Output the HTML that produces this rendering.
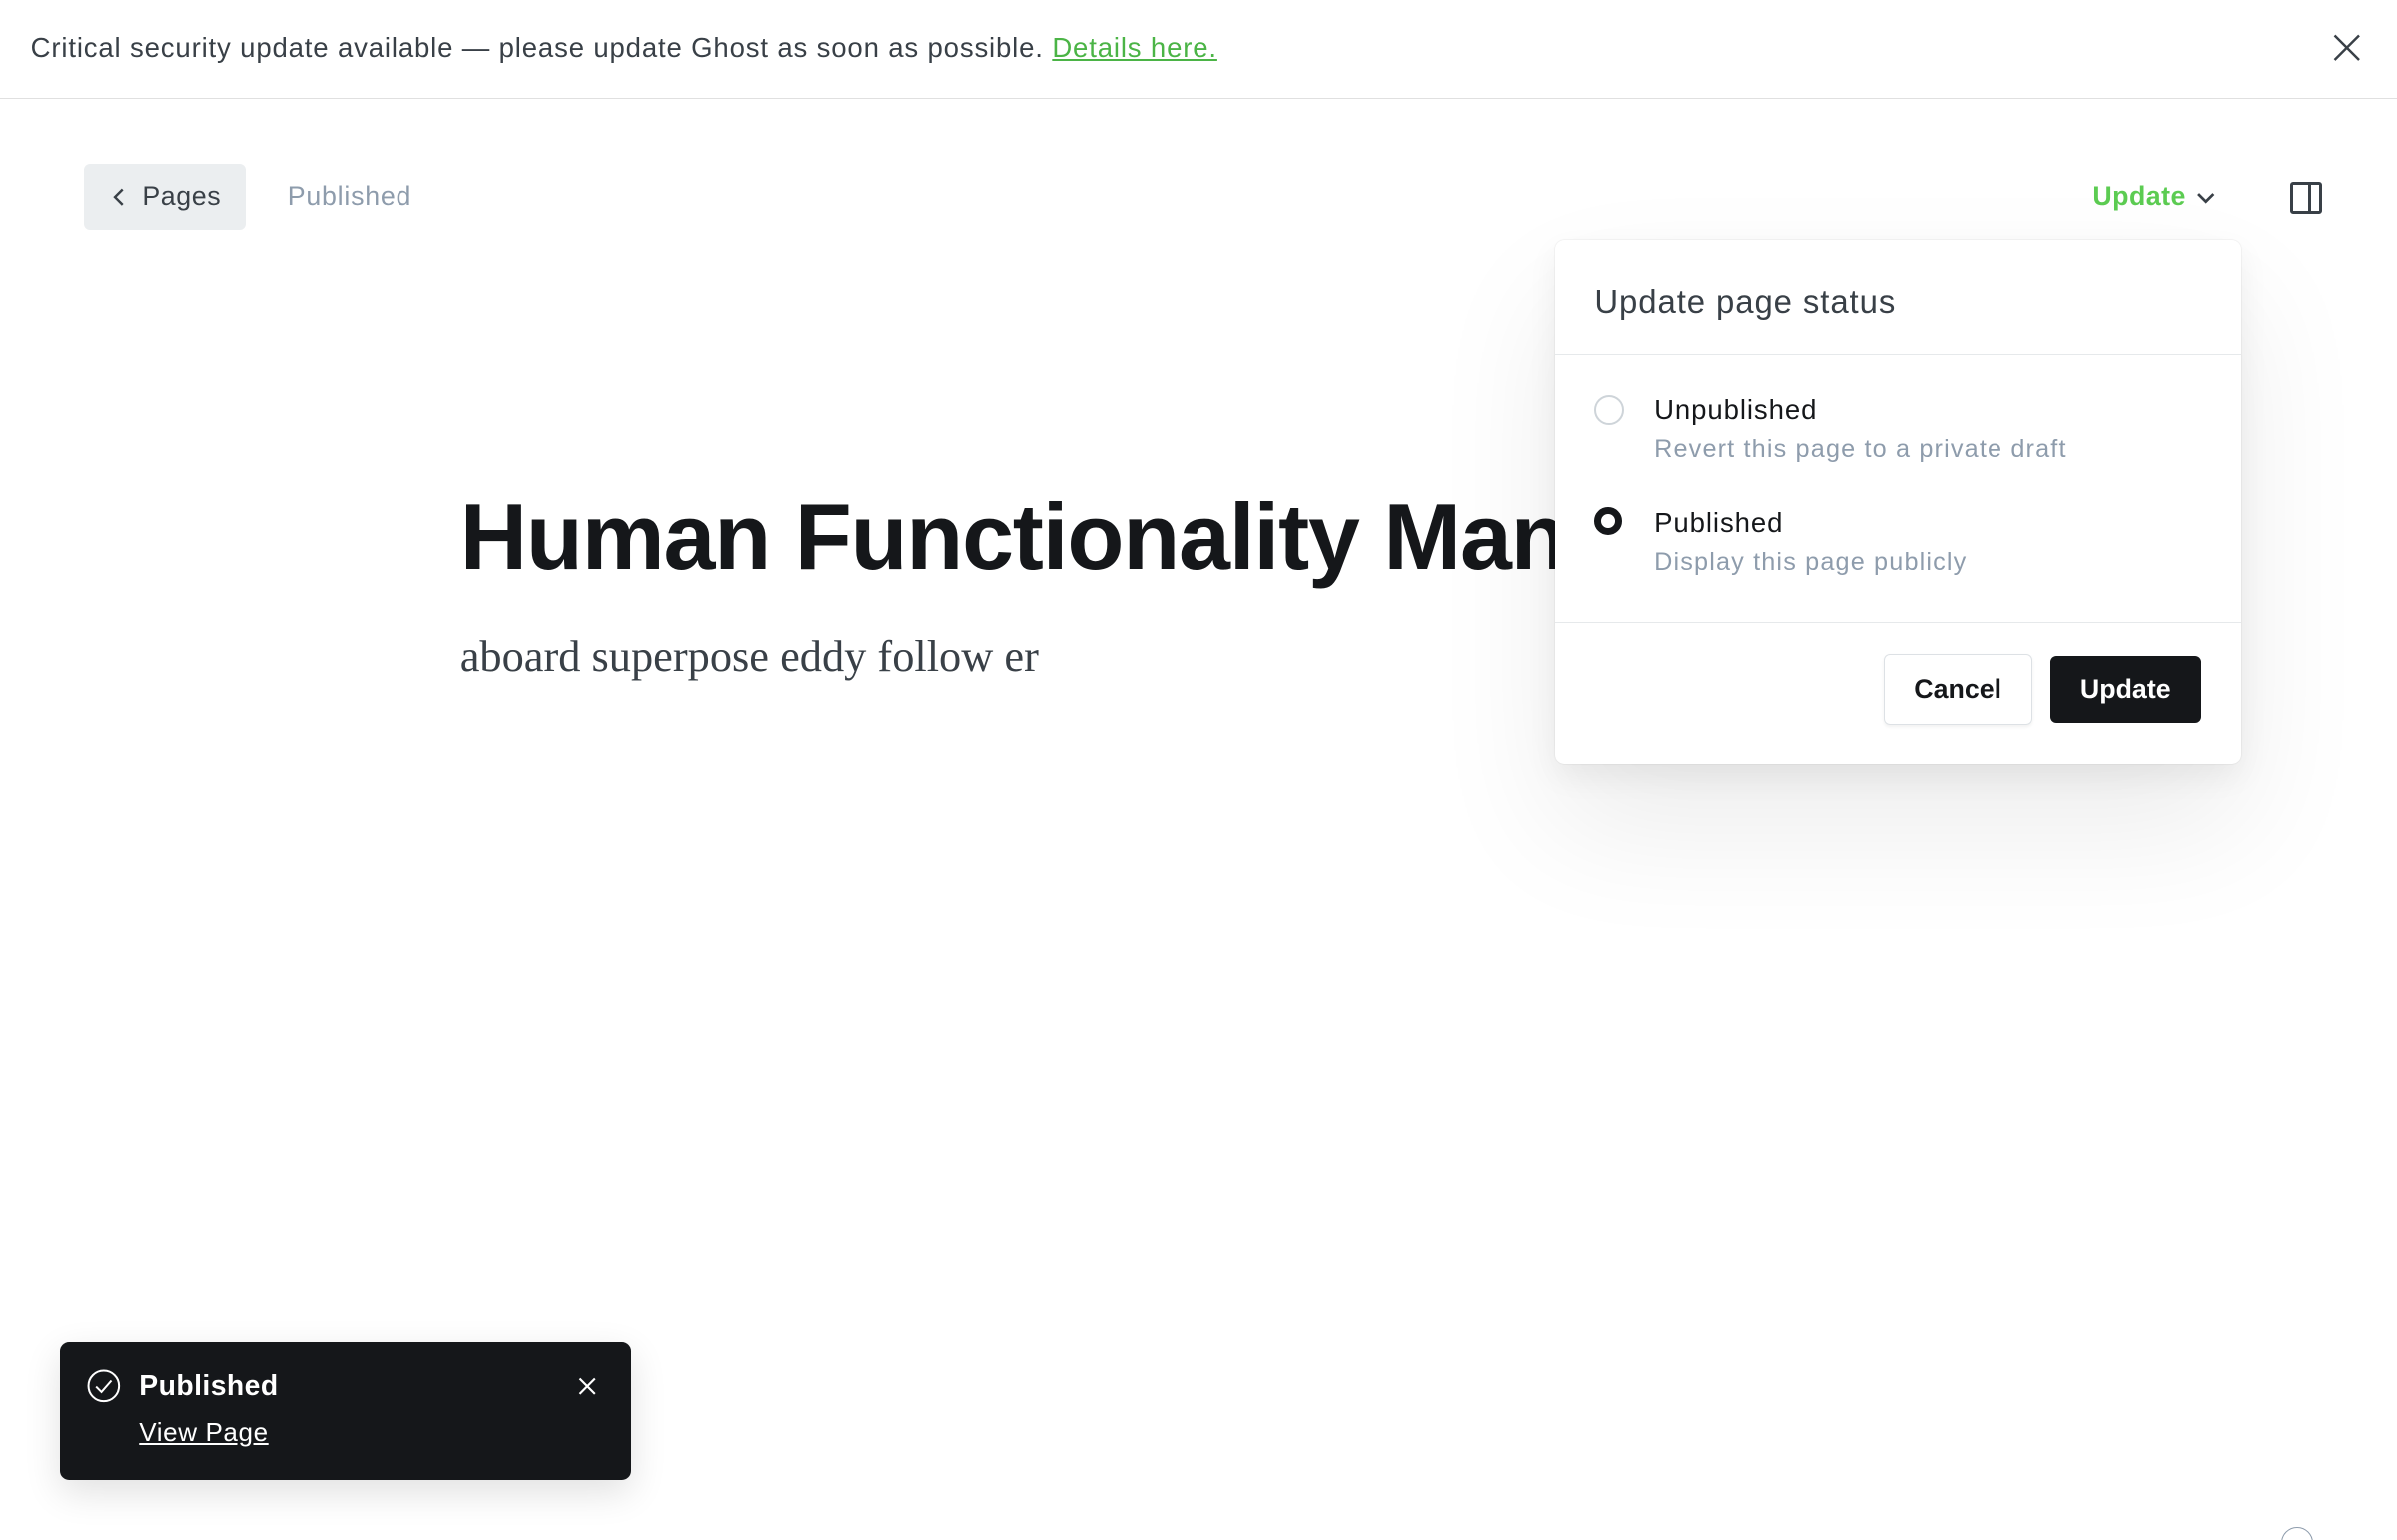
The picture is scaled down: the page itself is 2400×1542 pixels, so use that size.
<!DOCTYPE html>
<html><head><meta charset="utf-8"><style>
html,body{margin:0;padding:0;background:#fff;overflow:hidden}
body{width:2400px;height:1542px;position:relative}
#z{zoom:1.5306;width:1568px;height:1007px;position:relative;font-family:"Liberation Sans",sans-serif;color:#15171a}
.abs{position:absolute}
</style></head><body><div id="z">
<div class="abs" style="left:0;top:0;width:1568px;height:64px;border-bottom:1px solid #e0e0e0"></div>
<div class="abs" style="left:20px;top:21px;font-size:18px;color:#394047;letter-spacing:0.55px;white-space:nowrap">Critical security update available — please update Ghost as soon as possible. <span style="color:#4bb446;text-decoration:underline">Details here.</span></div>
<svg class="abs" style="left:1526px;top:22px" width="18" height="18" viewBox="0 0 18 18"><path d="M1 1L17 17M17 1L1 17" stroke="#394047" stroke-width="1.6"/></svg>

<div class="abs" style="left:55px;top:107px;width:106px;height:43px;background:#ebeef0;border-radius:4px"></div>
<svg class="abs" style="left:73px;top:123px" width="10" height="12" viewBox="0 0 10 12"><path d="M7 1L2 6L7 11" fill="none" stroke="#394047" stroke-width="1.6"/></svg>
<div class="abs" style="left:93px;top:118px;font-size:17.5px;color:#394047;letter-spacing:0.4px">Pages</div>
<div class="abs" style="left:188px;top:118px;font-size:17.5px;color:#8e9cac;letter-spacing:0.5px">Published</div>

<div class="abs" style="left:1369px;top:118px;font-size:17.5px;color:#5ccc52;font-weight:bold;letter-spacing:0.3px">Update</div>
<svg class="abs" style="left:1436px;top:125px" width="14" height="10" viewBox="0 0 14 10"><path d="M2 2L7 7L12 2" fill="none" stroke="#394047" stroke-width="1.8"/></svg>
<div class="abs" style="left:1498px;top:119px;width:17px;height:17px;border:2px solid #394047;border-radius:2px"></div>
<div class="abs" style="left:1510px;top:119px;width:2px;height:21px;background:#394047"></div>

<div class="abs" style="left:301px;top:316px;font-size:61px;font-weight:bold;letter-spacing:-0.8px;color:#15171a;white-space:nowrap">Human Functionality Manual</div>
<div class="abs" style="left:301px;top:412px;font-size:29px;font-family:'Liberation Serif',serif;color:#394047;white-space:nowrap">aboard superpose eddy follow er</div>

<div class="abs" style="left:1017px;top:157px;width:449px;height:343px;background:#fff;border-radius:6px;box-shadow:0 0 1px rgba(0,0,0,.15),0 40px 90px rgba(0,0,0,.08),0 8px 20px rgba(0,0,0,.06)">
 <div class="abs" style="left:26px;top:28px;font-size:21.5px;color:#394047;letter-spacing:0.6px">Update page status</div>
 <div class="abs" style="left:0;top:74px;width:449px;height:1px;background:#e6e9eb"></div>
 <div class="abs" style="left:26px;top:102px;width:17px;height:17px;border:1.5px solid #ced4d9;border-radius:50%"></div>
 <div class="abs" style="left:65px;top:101px;font-size:18px;color:#15171a;letter-spacing:0.6px">Unpublished</div>
 <div class="abs" style="left:65px;top:128px;font-size:16.5px;color:#8e9cac;letter-spacing:0.75px">Revert this page to a private draft</div>
 <div class="abs" style="left:26px;top:175px;width:9px;height:9px;border:5px solid #15171a;border-radius:50%"></div>
 <div class="abs" style="left:65px;top:175px;font-size:18px;color:#15171a;letter-spacing:0.6px">Published</div>
 <div class="abs" style="left:65px;top:202px;font-size:16.5px;color:#8e9cac;letter-spacing:0.75px">Display this page publicly</div>
 <div class="abs" style="left:0;top:250px;width:449px;height:1px;background:#e6e9eb"></div>
 <div class="abs" style="left:215px;top:271px;width:96px;height:45px;border:1px solid #dde1e5;border-radius:4px;box-shadow:0 1px 2px rgba(0,0,0,.06);text-align:center;line-height:45px;font-size:17.5px;font-weight:bold;color:#15171a">Cancel</div>
 <div class="abs" style="left:324px;top:272px;width:99px;height:44px;background:#15171a;border-radius:4px;text-align:center;line-height:44px;font-size:17.5px;font-weight:bold;color:#fff">Update</div>
</div>

<div class="abs" style="left:39px;top:878px;width:374px;height:90px;background:#15171a;border-radius:6px;box-shadow:0 8px 24px rgba(0,0,0,.12)">
 <svg class="abs" style="left:18px;top:18px" width="22" height="22" viewBox="0 0 22 22"><circle cx="11" cy="11" r="10" fill="none" stroke="#fff" stroke-width="1.3"/><path d="M6 11.5L9.5 15L16 7.5" fill="none" stroke="#fff" stroke-width="1.3"/></svg>
 <div class="abs" style="left:52px;top:18px;font-size:18.5px;font-weight:bold;color:#fff;letter-spacing:0.3px">Published</div>
 <div class="abs" style="left:52px;top:49px;font-size:17px;color:#fff;text-decoration:underline;letter-spacing:0.4px">View Page</div>
 <svg class="abs" style="left:339px;top:23px" width="12" height="12" viewBox="0 0 12 12"><path d="M1 1L11 11M11 1L1 11" stroke="#fff" stroke-width="1.4"/></svg>
</div>

<div class="abs" style="left:1492px;top:999px;width:20px;height:20px;border:1.3px solid #8e9cac;border-radius:50%"></div>
</div></body></html>
